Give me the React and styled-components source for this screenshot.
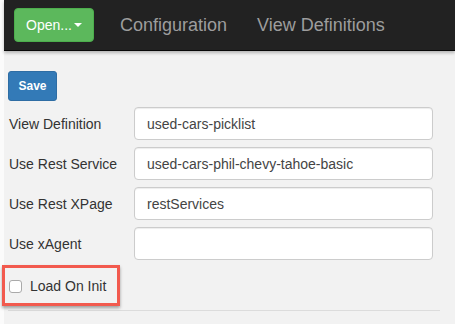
import React from 'react'
import styled, { createGlobalStyle } from 'styled-components'

const GlobalStyle = createGlobalStyle`
  html, body {
    margin: 0;
    padding: 0;
    background: #fbfbfb;
    font-family: "Liberation Sans", Arial, sans-serif;
  }
`

const Page = styled.div`
  padding-left: 4px;
  height: 324px;
  overflow: hidden;
`

const Navbar = styled.nav`
  display: flex;
  align-items: center;
  height: 51px;
  background: #222;
  border-bottom: 1px solid #080808;
  box-shadow: 0 2px 3px rgba(0, 0, 0, 0.25);
  padding-left: 10px;
  box-sizing: border-box;
  position: relative;
  z-index: 1;
`

const OpenButton = styled.button`
  display: flex;
  align-items: center;
  justify-content: center;
  width: 80px;
  height: 34px;
  margin-top: -1px;
  background: #5cb85c;
  border: 1px solid #4cae4c;
  border-radius: 4px;
  color: #fff;
  font-family: inherit;
  font-size: 14px;
  padding: 0;
  margin-right: 26px;
`

const Caret = styled.span`
  display: inline-block;
  width: 0;
  height: 0;
  margin-left: 2px;
  border-top: 4px solid #fff;
  border-left: 4px solid transparent;
  border-right: 4px solid transparent;
`

const NavLink = styled.a`
  color: #9d9d9d;
  font-size: 18px;
  margin-right: 30px;
  text-decoration: none;
`

const Main = styled.main`
  background: #f2f2f2;
  padding: 20px 22px 0 4px;
  height: 273px;
  box-sizing: border-box;
`

const SaveButton = styled.button`
  width: 49px;
  height: 30px;
  background: #337ab7;
  border: 1px solid #2e6da4;
  border-radius: 3px;
  color: #fff;
  font-family: inherit;
  font-size: 12px;
  font-weight: bold;
  padding: 0;
  margin-bottom: 6px;
`

const Form = styled.div`
  display: grid;
  grid-template-columns: 126px 1fr;
  row-gap: 7px;
  align-items: center;
`

const Label = styled.label`
  color: #333;
  font-size: 14px;
  padding-left: 1px;
`

const Input = styled.input`
  height: 33px;
  box-sizing: border-box;
  border: 1px solid #ccc;
  border-radius: 4px;
  background: #fff;
  padding: 0 12px;
  font-family: inherit;
  font-size: 14px;
  color: #444;
  box-shadow: inset 0 1px 1px rgba(0, 0, 0, 0.075);
  outline: none;
`

const Highlight = styled.div`
  display: inline-flex;
  align-items: center;
  gap: 8px;
  margin: 5px 0 0 -6px;
  width: 118px;
  height: 41px;
  box-sizing: border-box;
  border: 3px solid #f25a4e;
  padding-left: 4px;
  box-shadow: 0 2px 3px rgba(0, 0, 0, 0.35);
  font-size: 14px;
  color: #333;
`

const Check = styled.span`
  width: 11px;
  height: 11px;
  border: 1px solid #aaa;
  border-radius: 3px;
  background: #fff;
  margin-top: 1px;
`

const Divider = styled.hr`
  border: 0;
  border-top: 1px solid #dcdcdc;
  margin: 4px 0 0 0;
  width: 432px;
`

const rows = [
  ['View Definition', 'used-cars-picklist'],
  ['Use Rest Service', 'used-cars-phil-chevy-tahoe-basic'],
  ['Use Rest XPage', 'restServices'],
  ['Use xAgent', ''],
]

export default function App() {
  return (
    <Page>
      <GlobalStyle />
      <Navbar>
        <OpenButton>
          Open...<Caret />
        </OpenButton>
        <NavLink>Configuration</NavLink>
        <NavLink>View Definitions</NavLink>
      </Navbar>
      <Main>
        <SaveButton>Save</SaveButton>
        <Form>
          {rows.map(([label, value]) => (
            <React.Fragment key={label}>
              <Label>{label}</Label>
              <Input defaultValue={value} />
            </React.Fragment>
          ))}
        </Form>
        <Highlight>
          <Check />
          Load On Init
        </Highlight>
        <Divider />
      </Main>
    </Page>
  )
}
